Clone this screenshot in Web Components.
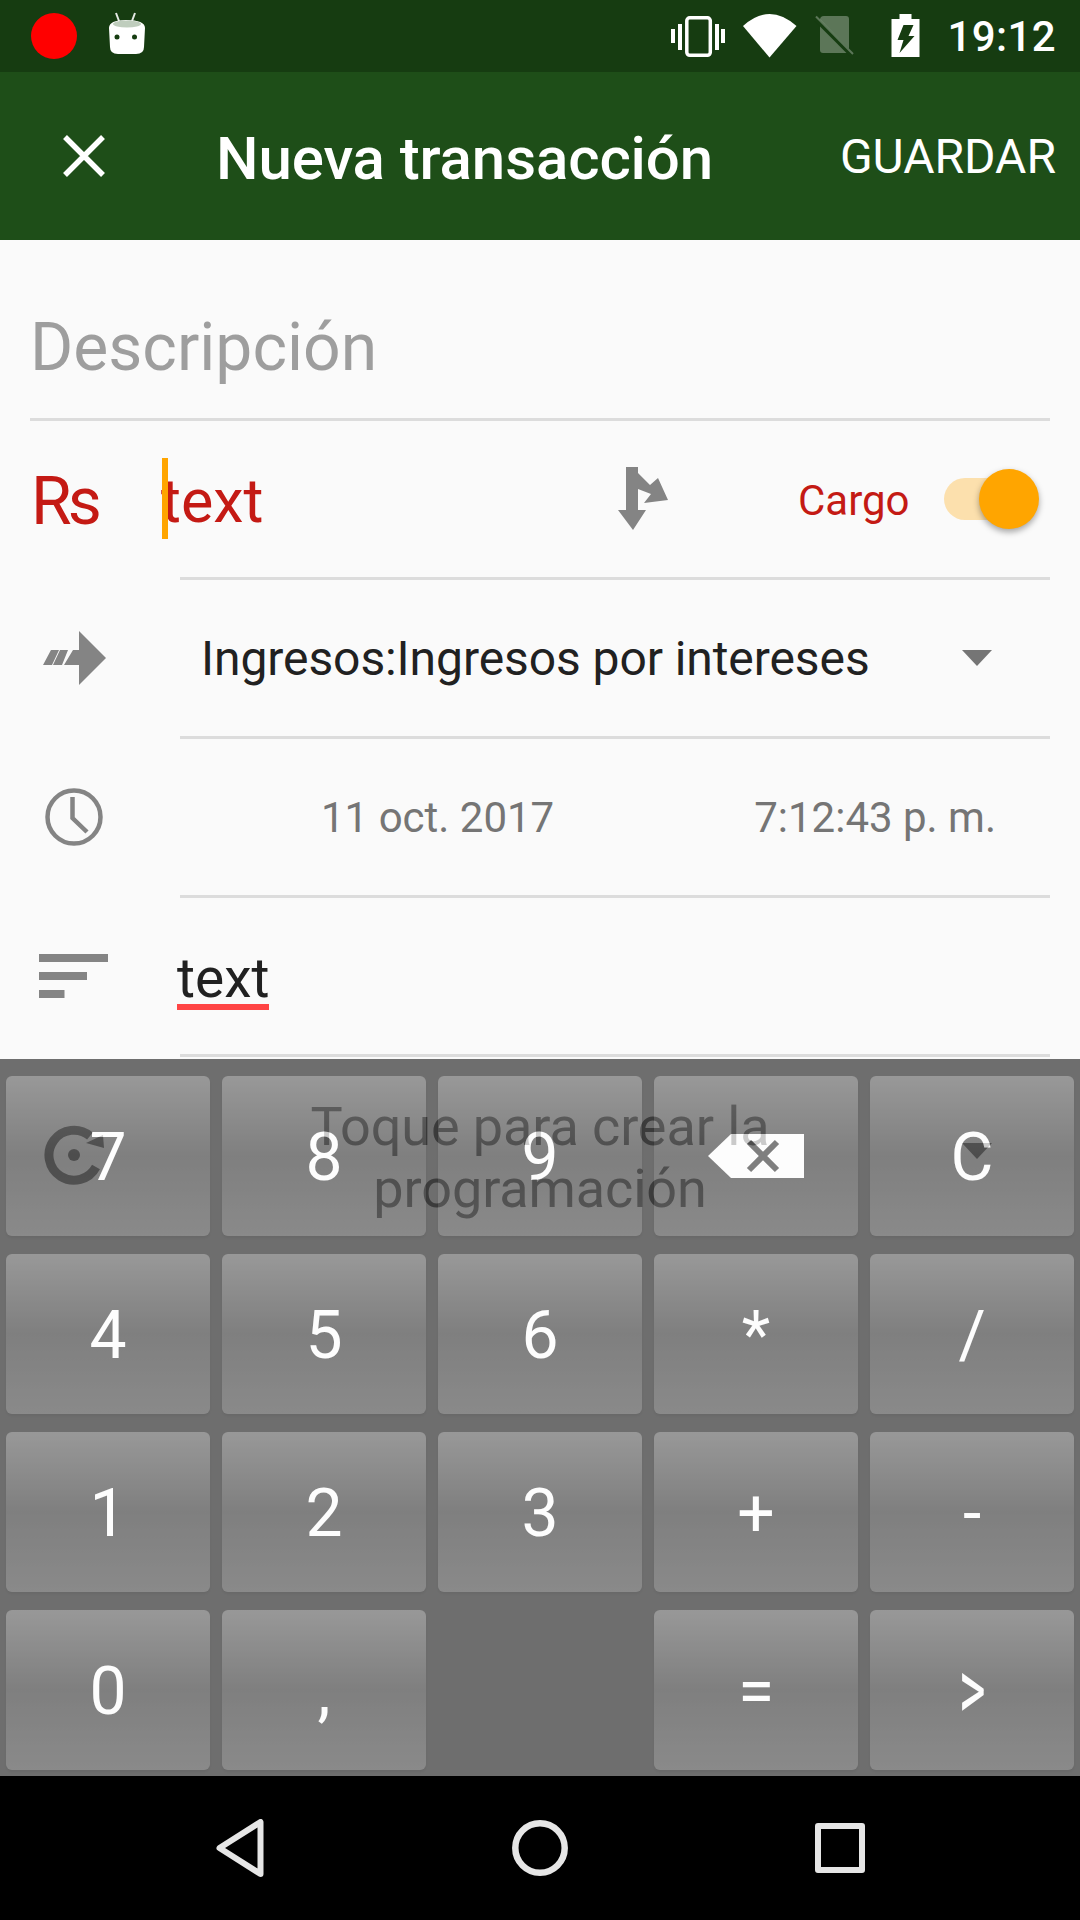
<!DOCTYPE html>
<html lang="es">
<head>
<meta charset="utf-8">
<title>Nueva transacción</title>
<style>
  html, body { margin: 0; padding: 0; background: #fafafa; }
  body { width: 1080px; height: 1920px; overflow: hidden; font-family: Roboto, "Liberation Sans", sans-serif; }
  .lead-icon { display: block; }
  .narrow { display: inline-block; margin-top: -2px; transform: scale(.78, 1.28); }
</style>
</head>
<body>
<app-screen>
  <status-bar slot="top"></status-bar>
  <app-toolbar slot="top" heading="Nueva transacción" action="GUARDAR"></app-toolbar>

  <description-field placeholder="Descripción"></description-field>

  <form-row>
    <amount-line value="text" symbol="Rs" kind="Cargo"></amount-line>
  </form-row>

  <form-row>
    <svg slot="icon" class="lead-icon" width="66" height="56" viewBox="40 630 66 56" fill="#848484">
      <path d="M78 631 L105 658 L78 685 V665 H63 L72 650 H78 Z"/>
      <path d="M50 650 H58 L51 665 H42 Z"/>
      <path d="M59 650 H67 L61 665 H52 Z"/>
    </svg>
    <account-spinner value="Ingresos:Ingresos por intereses"></account-spinner>
  </form-row>

  <form-row>
    <svg slot="icon" class="lead-icon" width="58" height="58" viewBox="0 0 58 58" fill="none" stroke="#848484">
      <circle cx="29" cy="29" r="26.5" stroke-width="4.5"/>
      <path d="M27.5 9 V30 L42 44" stroke-width="4.5"/>
    </svg>
    <date-line date="11 oct. 2017" time="7:12:43 p. m."></date-line>
  </form-row>

  <form-row>
    <svg slot="icon" class="lead-icon" width="70" height="44" viewBox="0 0 70 44" fill="#848484">
      <rect x="0" y="0" width="69" height="8"/>
      <rect x="0" y="18" width="48" height="8"/>
      <rect x="0" y="36" width="25.500" height="8"/>
    </svg>
    <note-field value="text"></note-field>
  </form-row>

  <form-row bare>
    <svg slot="icon" class="lead-icon" width="60" height="60" viewBox="43 1125 60 60" fill="#757575">
      <path d="M89 1136 A25 25 0 1 0 95 1167" fill="none" stroke="#757575" stroke-width="9"/>
      <circle cx="73" cy="1155" r="6"/>
      <path d="M85 1143 L102 1135 L103 1148 Z"/>
    </svg>
    <schedule-hint>Toque para crear la programación</schedule-hint>
  </form-row>

  <calc-keypad slot="over">
    <calc-key>7</calc-key><calc-key>8</calc-key><calc-key>9</calc-key>
    <calc-key>
      <svg style="margin-top:-3px" width="96" height="44" viewBox="708 1135 96 44">
        <path d="M731 1135 H804 V1179 H731 L708 1157 Z" fill="#fff"/>
        <path d="M749 1143 L777 1171 M777 1143 L749 1171" stroke="#353535" stroke-width="6" fill="none"/>
      </svg>
    </calc-key>
    <calc-key>C</calc-key>
    <calc-key>4</calc-key><calc-key>5</calc-key><calc-key>6</calc-key><calc-key>*</calc-key><calc-key>/</calc-key>
    <calc-key>1</calc-key><calc-key>2</calc-key><calc-key>3</calc-key><calc-key>+</calc-key><calc-key>-</calc-key>
    <calc-key>0</calc-key><calc-key>,</calc-key><calc-key blank></calc-key><calc-key>=</calc-key><calc-key><span class="narrow">&gt;</span></calc-key>
  </calc-keypad>

  <nav-bar slot="bottom"></nav-bar>
</app-screen>

<script>
// small helper so every element below is declared the same way
const define = (name, css, html) => {
  customElements.define(name, class extends HTMLElement {
    constructor() {
      super();
      this.attachShadow({ mode: "open" });
    }
    connectedCallback() {
      const attr = (k) => this.getAttribute(k) || "";
      this.shadowRoot.innerHTML = `<style>${css}</style>${typeof html === "function" ? html(attr) : html}`;
    }
  });
};

define("app-screen", `
  :host { display: flex; flex-direction: column; width: 1080px; height: 1920px; }
  .body { position: relative; flex: 1; overflow: hidden; background: #fafafa; }
  .over { position: absolute; left: 0; right: 0; bottom: 0; }
`, `
  <slot name="top"></slot>
  <div class="body"><slot></slot><div class="over"><slot name="over"></slot></div></div>
  <slot name="bottom"></slot>
`);

define("status-bar", `
  :host { display: flex; align-items: center; height: 72px; background: #163c11; color: #fff; font: 500 42px Roboto, sans-serif; flex: none; }
  svg { display: block; flex: none; }
  .dot { width: 46px; height: 46px; border-radius: 50%; background: #f00; margin-left: 31px; flex: none; }
  .time { margin-left: 27px; letter-spacing: .4px; }
  .spacer { flex: 1; }
`, `
  <div class="dot"></div>
  <svg style="margin-left:31px;margin-top:-5px" width="38" height="44" viewBox="108 11 38 44">
    <path d="M116 12 L119 20 M135 12 L132 20" stroke="#e4e9e4" stroke-width="2" fill="none"/>
    <path d="M109 27 Q109 19 126 19 Q145 19 145 27 L144 46 Q144 53 136 53 H118 Q110 53 110 46 Z" fill="#fff"/>
    <ellipse cx="127" cy="23" rx="14" ry="3.500" fill="#bfcdbd"/>
    <circle cx="117" cy="36" r="2.500" fill="#163c11"/><circle cx="134.500" cy="36" r="2.500" fill="#163c11"/>
  </svg>
  <div class="spacer"></div>
  <svg width="54" height="43" viewBox="671 15 54 43" fill="#fff">
    <rect x="686.800" y="17.800" width="23.500" height="37.500" rx="3" fill="none" stroke="#fff" stroke-width="3.500"/>
    <rect x="671" y="29" width="4" height="14"/><rect x="678" y="24" width="4" height="26"/>
    <rect x="715" y="24" width="4" height="26"/><rect x="721" y="29" width="4" height="14"/>
  </svg>
  <svg style="margin-left:18px" width="54" height="44" viewBox="743 14 54 44" fill="#fff">
    <path d="M769.500 57.500 L743 26 Q769.500 2 796.500 26 Z"/>
  </svg>
  <svg style="margin-left:17px" width="40" height="42" viewBox="814 16 40 42">
    <path d="M820 21 Q820 17 824 17 H846 Q849 17 849 20 V51 Q849 54 846 54 H823 Q820 54 820 51 Z" fill="#fff" fill-opacity=".3"/>
    <path d="M815 19 L853 57" stroke="#163c11" stroke-width="5"/>
    <path d="M816 17.500 L853 55" stroke="#fff" stroke-opacity=".3" stroke-width="2"/>
  </svg>
  <svg style="margin-left:37px" width="29" height="44" viewBox="890.500 14 29 44" fill="#fff">
    <path d="M899 14 H911 V19 H919 V57 H891 V19 H899 Z"/>
    <path d="M903 25 H913 L908 36 H914 L899 53 L903 40 H897 Z" fill="#163c11"/>
  </svg>
  <div class="time">19:12</div>
  <div style="width:24px;flex:none"></div>
`);

define("app-toolbar", `
  :host { display: flex; align-items: center; height: 168px; background: #1e4e18; color: #fff; flex: none; }
  svg { display: block; margin-left: 63px; flex: none; }
  h1 { margin: 4px 0 0 111px; font: 500 60px Roboto, sans-serif; letter-spacing: -.1px; flex: 1; white-space: nowrap; }
  .action { font: 400 48px Roboto, sans-serif; margin-right: 24px; }
`, (a) => `
  <svg width="42" height="42" viewBox="0 0 42 42"><path d="M2 2 L40 40 M40 2 L2 40" stroke="#fff" stroke-width="5.500"/></svg>
  <h1>${a("heading")}</h1>
  <div class="action">${a("action")}</div>
`);

define("description-field", `
  :host { display: block; height: 181px; box-sizing: border-box; margin: 0 30px; border-bottom: 3px solid #dcdcdc; padding-top: 66px; }
  .hint { font: 400 66px/84px Roboto, sans-serif; color: #9e9e9e; }
`, (a) => `<div class="hint">${a("placeholder")}</div>`);

define("form-row", `
  :host { display: flex; flex-direction: column; height: 159px; }
  :host([bare]) { height: 196px; }
  :host([bare]) .line { display: none; }
  .content { flex: 1; display: grid; grid-template-columns: 147px 33px 1fr; align-items: center; min-height: 0; }
  .icon { display: flex; justify-content: center; }
  .main { grid-column: 3; }
  ::slotted(amount-line) { margin-left: -180px; }
  .line { height: 3px; margin: 0 30px 0 180px; background: #dcdcdc; flex: none; }
`, `
  <div class="content"><div class="icon"><slot name="icon"></slot></div><div class="main"><slot></slot></div></div>
  <div class="line"></div>
`);

define("amount-line", `
  :host { display: flex; align-items: center; height: 156px; color: #c41a14; }
  .symbol { width: 131px; padding-left: 31px; margin-top: 4px; font: 400 66px Roboto, sans-serif; letter-spacing: -4px; flex: none; }
  .value { position: relative; font: 400 61px Roboto, sans-serif; width: 455px; flex: none; }
  .value span { display: block; margin: 4px 0 0 -1px; }
  .cursor { position: absolute; left: 0; top: -3px; width: 6px; height: 81px; background: #ffa500; }
  svg { display: block; }
  .split { width: 181px; flex: none; }
  .kind { font: 400 42px Roboto, sans-serif; width: 146px; margin-top: 2px; flex: none; }
`, (a) => `
  <div class="symbol">${a("symbol")}</div>
  <div class="value"><i class="cursor"></i><span>${a("value")}</span></div>
  <div class="split">
    <svg width="52" height="64" viewBox="616 467 52 64" fill="#848484">
      <path d="M625 467 H637 V473 L649 485 L657 478 L667 500 L643 503 L650 494 L637 489 V510 H645 L632 530 L617 510 H625 Z"/>
    </svg>
  </div>
  <div class="kind">${a("kind")}</div>
  <mini-switch></mini-switch>
`);

define("mini-switch", `
  :host { display: block; position: relative; width: 94px; height: 60px; flex: none; }
  .track { position: absolute; left: 0; top: 9px; width: 86px; height: 42px; border-radius: 21px; background: #fce0ad; }
  .thumb { position: absolute; left: 35px; top: 0; width: 60px; height: 60px; border-radius: 50%; background: #ffa500; box-shadow: 0 3px 6px rgba(0,0,0,.35); }
`, `<div class="track"></div><div class="thumb"></div>`);

define("account-spinner", `
  :host { display: flex; align-items: center; justify-content: space-between; padding: 0 88px 0 21px; color: #212121; font: 400 48px Roboto, sans-serif; letter-spacing: -.08px; }
  i { display: block; width: 0; height: 0; border-left: 15px solid transparent; border-right: 15px solid transparent; border-top: 16px solid #757575; }
`, (a) => `<span>${a("value")}</span><i></i>`);

define("date-line", `
  :host { display: flex; color: #757575; font: 400 42px Roboto, sans-serif; padding: 0 84px 0 141px; justify-content: space-between; }
`, (a) => `<span>${a("date")}</span><span>${a("time")}</span>`);

define("note-field", `
  :host { display: block; font: 400 55px Roboto, sans-serif; color: #212121; margin: 4px 0 0 -3px; }
  span { display: inline-block; border-bottom: 6px solid #ff4444; line-height: 52px; }
`, (a) => `<span>${a("value")}</span>`);

define("schedule-hint", `
  :host { display: block; position: relative; margin-left: -180px; width: 1080px; box-sizing: border-box; padding: 6px 280px 0; text-align: center; color: #757575; font: 400 54px/62px Roboto, sans-serif; letter-spacing: -.1px; }
  i { position: absolute; left: 962px; top: 53px; width: 0; height: 0; border-left: 15px solid transparent; border-right: 15px solid transparent; border-top: 16px solid #757575; }
`, `<slot></slot><i></i>`);

define("calc-keypad", `
  :host { display: grid; grid-template-columns: repeat(5, 204px); grid-auto-rows: 160px; gap: 18px 12px; padding: 17px 6px 6px; background: #1a1a1a; opacity: .62; height: 717px; box-sizing: border-box; }
`, `<slot></slot>`);

define("calc-key", `
  :host { display: flex; align-items: center; justify-content: center; box-sizing: border-box; padding-top: 3px; border-radius: 6px; color: #fff; font: 400 66px Roboto, sans-serif; background: linear-gradient(#5d5d5d, #353535 50%, #464646); box-shadow: 0 2px 3px rgba(0,0,0,.4); }
  :host([blank]) { background: none; box-shadow: none; }
`, `<slot></slot>`);

define("nav-bar", `
  :host { display: grid; grid-template-columns: repeat(3, 300px); padding: 0 90px; align-items: center; justify-items: center; height: 144px; background: #000; flex: none; }
  svg { display: block; }
`, `
  <svg width="48" height="58" viewBox="0 0 48 58" fill="none" stroke="#e6e6e6" stroke-width="6" stroke-linejoin="round"><path d="M44.500 3 V55 L3.500 29 Z"/></svg>
  <svg width="56" height="56" viewBox="0 0 56 56" fill="none" stroke="#e6e6e6" stroke-width="6.500"><circle cx="28" cy="28" r="24.700"/></svg>
  <svg width="50" height="50" viewBox="0 0 50 50" fill="none" stroke="#e6e6e6" stroke-width="6" stroke-linejoin="round"><rect x="3" y="3" width="44" height="44"/></svg>
`);
</script>
</body>
</html>
